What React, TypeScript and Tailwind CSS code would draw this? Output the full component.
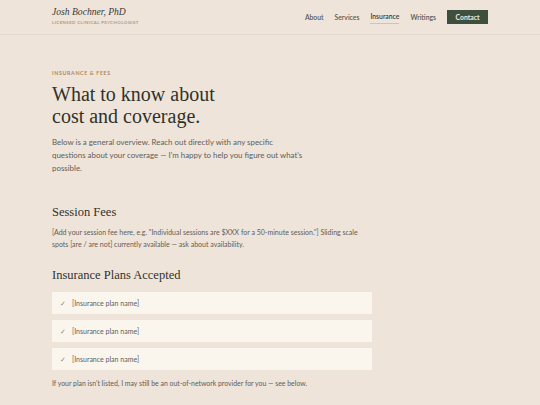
import React from "react";

const serif = { fontFamily: '"Liberation Serif", "DejaVu Serif", serif' };

export default function App() {
  const plans = ["[Insurance plan name]", "[Insurance plan name]", "[Insurance plan name]"];
  return (
    <div className="min-h-[405px] w-[540px] bg-[#efe4da] text-[#3a3a36]" style={{ fontFamily: 'Lato, "Open Sans", sans-serif' }}>
      <header className="h-[35px] border-b border-[#e4d8cc] flex items-center justify-between pl-[52px] pr-[52px]">
        <div className="flex flex-col mt-[-3px]">
          <div className="text-[9.6px] italic leading-[11px] text-[#3b3b36]" style={serif}>Josh Bochner, PhD</div>
          <div className="text-[4.4px] font-bold tracking-[0.09em] text-[#b39a74] mt-[3px] leading-[5px]">LICENSED CLINICAL PSYCHOLOGIST</div>
        </div>
        <nav className="flex items-center text-[6.8px] font-semibold text-[#5a5852]">
          <span className="mr-[11px]">About</span>
          <span className="mr-[11px]">Services</span>
          <span className="mr-[11px] border-b border-[#d8c3a6] pb-[1px] mt-[1px] text-[#3f3d38]">Insurance</span>
          <span className="mr-[11px]">Writings</span>
          <span className="bg-[#3e4f3e] text-[#f1ebe0] w-[41px] h-[14px] flex items-center justify-center font-bold">Contact</span>
        </nav>
      </header>
      <main className="pl-[52px] pt-[35px]">
        <div className="text-[5.3px] font-bold tracking-[0.12em] text-[#b3875a] leading-[6px]">INSURANCE &amp; FEES</div>
        <h1 className="text-[20px] leading-[22px] mt-[7px] text-[#2f322b]" style={serif}>
          What to know about
          <br />
          cost and coverage.
        </h1>
        <p className="text-[7.9px] leading-[13px] mt-[9px] w-[255px] text-[#605d58]">
          Below is a general overview. Reach out directly with any specific questions about your coverage — I'm happy to help you figure out what's possible.
        </p>
        <h2 className="text-[12.5px] leading-[14px] mt-[30px] text-[#2f322b]" style={serif}>Session Fees</h2>
        <p className="text-[7px] leading-[12px] mt-[7px] w-[320px] text-[#605d58]">
          [Add your session fee here, e.g. "Individual sessions are $XXX for a 50-minute session."] Sliding scale spots [are / are not] currently available — ask about availability.
        </p>
        <h2 className="text-[12.5px] leading-[14px] mt-[18px] text-[#2f322b]" style={serif}>Insurance Plans Accepted</h2>
        <div className="flex flex-col gap-[6px] mt-[10px] w-[320px]">
          {plans.map((p, i) => (
            <div key={i} className="h-[22px] bg-[#faf6ee] flex items-center pl-[8px] text-[7px] text-[#605d58]">
              <span className="text-[#a58662] mr-[6px] text-[7px]">✓</span>
              {p}
            </div>
          ))}
        </div>
        <p className="text-[6.9px] leading-[12px] mt-[7px] text-[#605d58]">
          If your plan isn't listed, I may still be an out-of-network provider for you — see below.
        </p>
      </main>
    </div>
  );
}
